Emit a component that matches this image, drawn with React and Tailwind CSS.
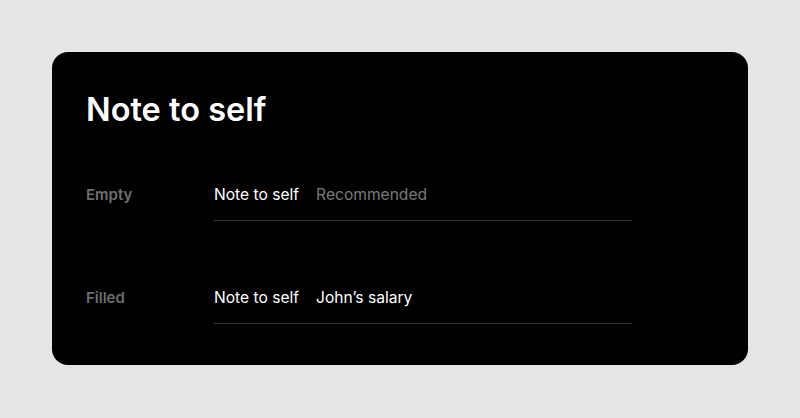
import React from 'react';

const rows = [
  { label: 'Empty', value: '', placeholder: 'Recommended' },
  { label: 'Filled', value: 'John’s salary', placeholder: 'Recommended' },
];

const NoteField = ({ value, placeholder }) => (
  <div className="w-[418px] h-[52px] flex items-center gap-[17px] border-b border-[#333333] text-[15.6px]">
    <span className="text-white">Note to self</span>
    {value ? (
      <span className="text-white">{value}</span>
    ) : (
      <span className="text-[#7a7a7a]">{placeholder}</span>
    )}
  </div>
);

export default function App() {
  return (
    <div className="w-[800px] h-[418px] bg-[#e5e5e5] pt-[52px] pl-[52px] font-['Inter',sans-serif]">
      <div className="w-[696px] h-[313px] bg-black rounded-[16px] pl-[34px] pt-[38px]">
        <h1 className="text-white text-[32.5px] font-semibold leading-[40px]">Note to self</h1>
        <div className="mt-[39px] flex flex-col gap-[51px]">
          {rows.map((row) => (
            <div key={row.label} className="flex">
              <div className="w-[128px] h-[52px] flex items-center text-[15px] font-semibold text-[#6e6e6e]">
                {row.label}
              </div>
              <NoteField value={row.value} placeholder={row.placeholder} />
            </div>
          ))}
        </div>
      </div>
    </div>
  );
}
